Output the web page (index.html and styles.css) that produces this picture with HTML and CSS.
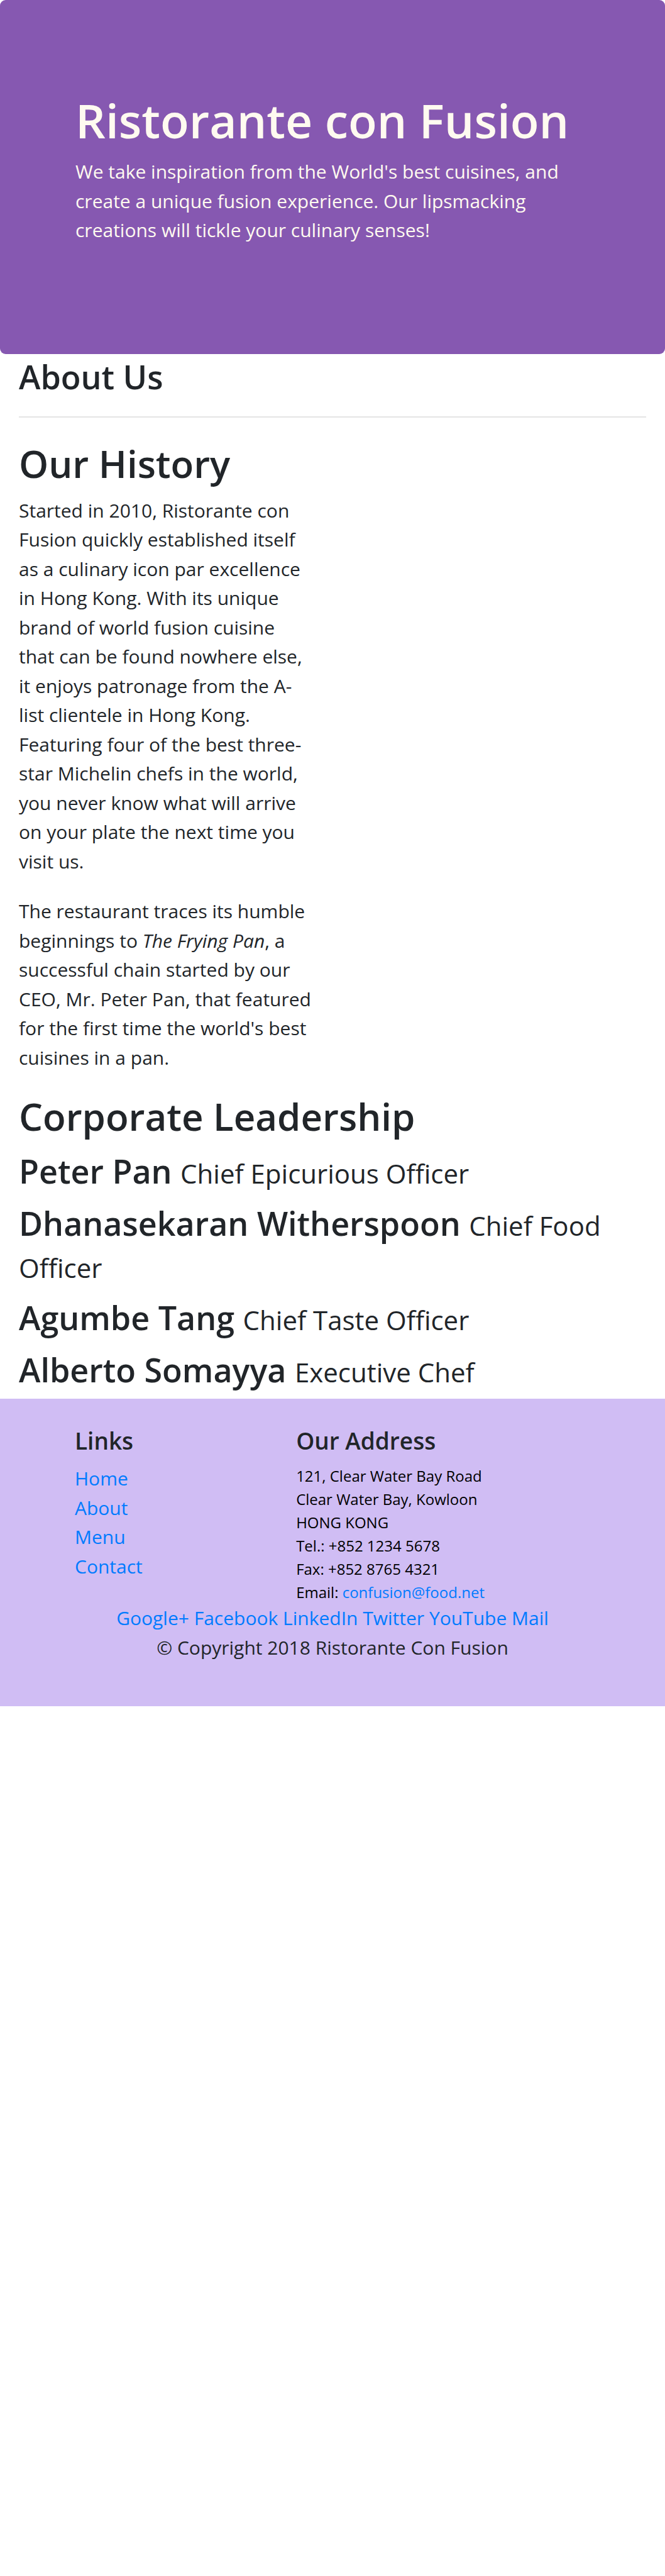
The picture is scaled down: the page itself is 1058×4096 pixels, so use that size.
FILE: index.html
```html
<!DOCTYPE html>
<html lang="en">
<head>
<meta charset="utf-8">
<meta name="viewport" content="width=device-width, initial-scale=1">
<title>Ristorante Con Fusion: About Us</title>
<link rel="stylesheet" href="styles.css">
</head>
<body>
<header class="hero">
  <h1 class="hero-title">Ristorante con Fusion</h1>
  <p class="hero-text">We take inspiration from the World's best cuisines, and create a unique fusion experience. Our lipsmacking creations will tickle your culinary senses!</p>
</header>
<main class="content">
  <h3 class="page-title">About Us</h3>
  <hr class="rule">
  <section class="history">
    <h2>Our History</h2>
    <p>Started in 2010, Ristorante con Fusion quickly established itself as a culinary icon par excellence in Hong Kong. With its unique brand of world fusion cuisine that can be found nowhere else, it enjoys patronage from the A-list clientele in Hong Kong. Featuring four of the best three-star Michelin chefs in the world, you never know what will arrive on your plate the next time you visit us.</p>
    <p>The restaurant traces its humble beginnings to <em>The Frying Pan</em>, a successful chain started by our CEO, Mr. Peter Pan, that featured for the first time the world's best cuisines in a pan.</p>
  </section>
  <section class="leadership">
    <h2>Corporate Leadership</h2>
    <h3>Peter Pan <small>Chief Epicurious Officer</small></h3>
    <h3>Dhanasekaran Witherspoon <small>Chief Food Officer</small></h3>
    <h3>Agumbe Tang <small>Chief Taste Officer</small></h3>
    <h3>Alberto Somayya <small>Executive Chef</small></h3>
  </section>
</main>
<footer class="footer">
  <div class="footer-columns">
    <nav>
      <h5>Links</h5>
      <ul class="links">
        <li><a href="#">Home</a></li>
        <li><a href="#">About</a></li>
        <li><a href="#">Menu</a></li>
        <li><a href="#">Contact</a></li>
      </ul>
    </nav>
    <section>
      <h5>Our Address</h5>
      <address>
        121, Clear Water Bay Road<br>
        Clear Water Bay, Kowloon<br>
        HONG KONG<br>
        Tel.: +852 1234 5678<br>
        Fax: +852 8765 4321<br>
        Email: <a href="mailto:confusion@food.net">confusion@food.net</a>
      </address>
    </section>
  </div>
  <div class="social">
    <a href="#">Google+</a>
    <a href="#">Facebook</a>
    <a href="#">LinkedIn</a>
    <a href="#">Twitter</a>
    <a href="#">YouTube</a>
    <a href="#">Mail</a>
  </div>
  <p class="copyright">© Copyright 2018 Ristorante Con Fusion</p>
</footer>
</body>
</html>
```
FILE: styles.css
```css
* {
  box-sizing: border-box;
}

body {
  margin: 0;
  background: #fff;
  color: #212529;
  font-family: "Open Sans", "Noto Sans", sans-serif;
  font-size: 30px;
  line-height: 1.55;
}

h1, h2, h3, h5, p, ul {
  margin: 0;
}

h1, h2, h3, h5 {
  font-weight: 600;
}

h2 {
  font-size: 60px;
  line-height: 74px;
}

h3 {
  font-size: 52px;
  line-height: 67px;
}

h5 {
  margin-bottom: 14px;
  font-size: 37px;
  line-height: 47px;
}

small {
  font-size: 42px;
  font-weight: 400;
  line-height: 1;
}

a {
  color: #007bff;
  text-decoration: none;
}

.hero {
  padding: 145px 120px 173px;
  border-radius: 9px;
  background: #8658b1;
  color: floralwhite;
}

.hero-title {
  margin-bottom: 12px;
  font-size: 75px;
  line-height: 93px;
}

.content {
  padding: 2px 30px 13px;
}

.rule {
  height: 2px;
  margin: 30px 0 36px;
  border: 0;
  background: #e5e5e5;
}

.history {
  width: 50%;
  padding-right: 28px;
}

.history h2 {
  margin-bottom: 15px;
}

.history p {
  margin-bottom: 33px;
}

.leadership {
  display: grid;
  gap: 16px;
}

.footer {
  padding: 43px 0 70px;
  background: #d0bdf4;
}

.footer-columns {
  display: grid;
  grid-template-columns: 3fr 5fr;
  padding-left: 119px;
}

.links {
  padding: 0;
  list-style: none;
}

address {
  color: #000;
  font-size: 24px;
  font-style: normal;
  line-height: 37px;
}

.social, .copyright {
  text-align: center;
}
```
